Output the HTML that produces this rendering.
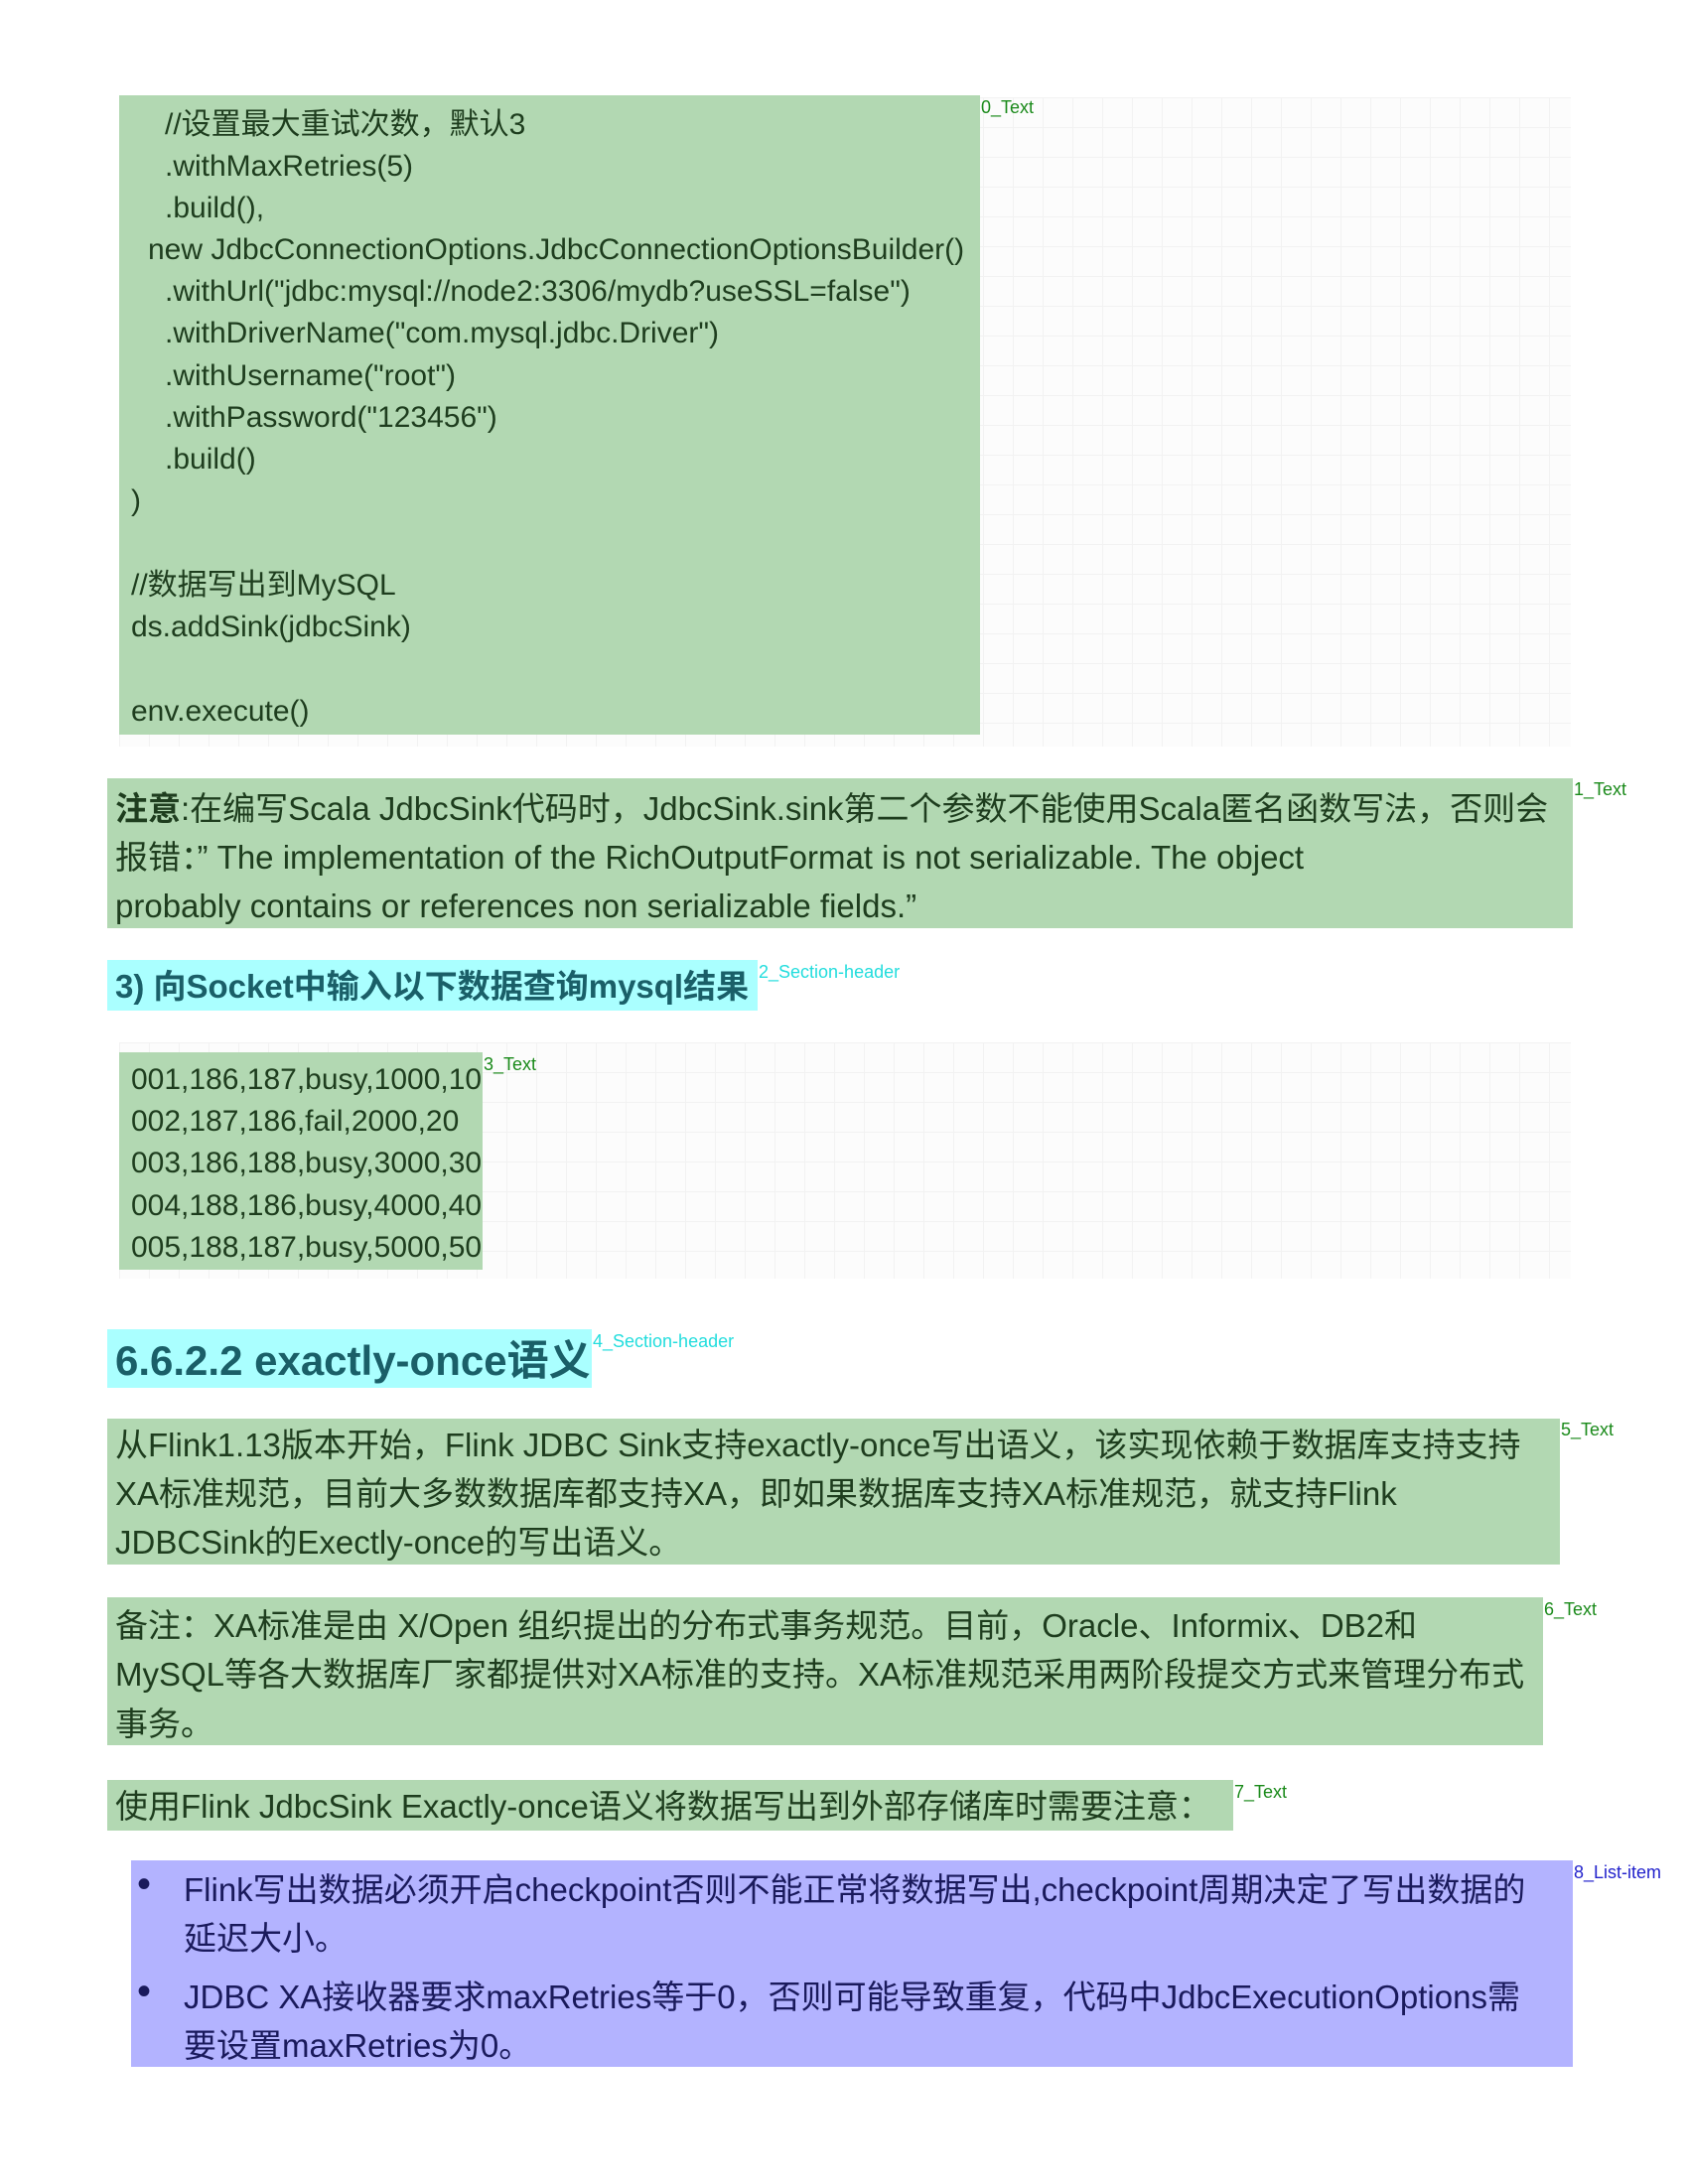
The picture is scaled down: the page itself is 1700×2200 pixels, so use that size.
<!DOCTYPE html>
<html><head><meta charset="utf-8"><style>
*{margin:0;padding:0;box-sizing:border-box}
html,body{width:1700px;height:2200px;background:#fff;overflow:hidden}
body{position:relative;font-family:"Liberation Sans","Noto Sans CJK SC",sans-serif}
.a{position:absolute}
.grid{background-color:#fcfcfc;background-image:linear-gradient(#f2f2f2 1px,transparent 1px),linear-gradient(90deg,#f2f2f2 1px,transparent 1px);background-size:30px 30px}
.g{background:#b2d8b2;color:#1e3d1e}
.c{background:#aaffff;color:#1a5f68;font-weight:bold}
.p{background:#b3b3ff;color:#1a1a5c}
.l{position:absolute;white-space:nowrap}
.lab{position:absolute;font-size:18px;white-space:nowrap}
.code .l{font-size:30px;line-height:42px}
.t .l{font-size:33px;line-height:49px}
.b{font-size:40px!important}
</style></head><body>

<div class="a grid" style="left:120px;top:98px;width:1462px;height:654px"></div>
<div class="a g code" style="left:120px;top:96px;width:867px;height:644px">
<div class="l" style="left:46px;top:9px">//设置最大重试次数，默认3</div>
<div class="l" style="left:46px;top:51px">.withMaxRetries(5)</div>
<div class="l" style="left:46px;top:93px">.build(),</div>
<div class="l" style="left:29px;top:135px">new JdbcConnectionOptions.JdbcConnectionOptionsBuilder()</div>
<div class="l" style="left:46px;top:177px">.withUrl("jdbc:mysql://node2:3306/mydb?useSSL=false")</div>
<div class="l" style="left:46px;top:219px">.withDriverName("com.mysql.jdbc.Driver")</div>
<div class="l" style="left:46px;top:262px">.withUsername("root")</div>
<div class="l" style="left:46px;top:304px">.withPassword("123456")</div>
<div class="l" style="left:46px;top:346px">.build()</div>
<div class="l" style="left:12px;top:388px">)</div>
<div class="l" style="left:12px;top:473px">//数据写出到MySQL</div>
<div class="l" style="left:12px;top:515px">ds.addSink(jdbcSink)</div>
<div class="l" style="left:12px;top:600px">env.execute()</div>
</div>
<div class="lab" style="left:988px;top:98px;color:#1a8a1a">0_Text</div>

<div class="a g t" style="left:108px;top:784px;width:1476px;height:151px">
<div class="l" style="left:8px;top:6px"><b>注意</b>:在编写Scala JdbcSink代码时，JdbcSink.sink第二个参数不能使用Scala匿名函数写法，否则会</div>
<div class="l" style="left:8px;top:55px">报错：”  The implementation of the RichOutputFormat is not serializable. The object</div>
<div class="l" style="left:8px;top:104px">probably contains or references non serializable fields.”</div>
</div>
<div class="lab" style="left:1585px;top:785px;color:#1a8a1a">1_Text</div>

<div class="a c" style="left:108px;top:967px;width:655px;height:51px"><div class="l" style="left:8px;top:7px;font-size:33px;line-height:40px">3) 向Socket中输入以下数据查询mysql结果</div></div>
<div class="lab" style="left:764px;top:969px;color:#22dddd">2_Section-header</div>

<div class="a grid" style="left:120px;top:1050px;width:1462px;height:238px"></div>
<div class="a g code" style="left:120px;top:1060px;width:366px;height:219px">
<div class="l" style="left:12px;top:7px">001,186,187,busy,1000,10</div>
<div class="l" style="left:12px;top:49px">002,187,186,fail,2000,20</div>
<div class="l" style="left:12px;top:91px">003,186,188,busy,3000,30</div>
<div class="l" style="left:12px;top:134px">004,188,186,busy,4000,40</div>
<div class="l" style="left:12px;top:176px">005,188,187,busy,5000,50</div>
</div>
<div class="lab" style="left:487px;top:1062px;color:#1a8a1a">3_Text</div>

<div class="a c" style="left:108px;top:1339px;width:488px;height:59px"><div class="l" style="left:8px;top:6px;font-size:42px;line-height:52px">6.6.2.2 exactly-once语义</div></div>
<div class="lab" style="left:597px;top:1341px;color:#22dddd">4_Section-header</div>

<div class="a g t" style="left:108px;top:1429px;width:1463px;height:147px">
<div class="l" style="left:8px;top:2px">从Flink1.13版本开始，Flink JDBC Sink支持exactly-once写出语义，该实现依赖于数据库支持支持</div>
<div class="l" style="left:8px;top:51px">XA标准规范，目前大多数数据库都支持XA，即如果数据库支持XA标准规范，就支持Flink</div>
<div class="l" style="left:8px;top:100px">JDBCSink的Exectly-once的写出语义。</div>
</div>
<div class="lab" style="left:1572px;top:1430px;color:#1a8a1a">5_Text</div>

<div class="a g t" style="left:108px;top:1609px;width:1446px;height:149px">
<div class="l" style="left:8px;top:4px">备注：XA标准是由 X/Open 组织提出的分布式事务规范。目前，Oracle、Informix、DB2和</div>
<div class="l" style="left:8px;top:53px">MySQL等各大数据库厂家都提供对XA标准的支持。XA标准规范采用两阶段提交方式来管理分布式</div>
<div class="l" style="left:8px;top:103px">事务。</div>
</div>
<div class="lab" style="left:1555px;top:1611px;color:#1a8a1a">6_Text</div>

<div class="a g t" style="left:108px;top:1793px;width:1134px;height:51px">
<div class="l" style="left:8px;top:2px">使用Flink JdbcSink Exactly-once语义将数据写出到外部存储库时需要注意：</div>
</div>
<div class="lab" style="left:1243px;top:1795px;color:#1a8a1a">7_Text</div>

<div class="a p t" style="left:132px;top:1874px;width:1452px;height:208px">
<div class="l b" style="left:6px;top:0px">•</div>
<div class="l" style="left:53px;top:5px">Flink写出数据必须开启checkpoint否则不能正常将数据写出,checkpoint周期决定了写出数据的</div>
<div class="l" style="left:53px;top:54px">延迟大小。</div>
<div class="l b" style="left:6px;top:108px">•</div>
<div class="l" style="left:53px;top:113px">JDBC XA接收器要求maxRetries等于0，否则可能导致重复，代码中JdbcExecutionOptions需</div>
<div class="l" style="left:53px;top:162px">要设置maxRetries为0。</div>
</div>
<div class="lab" style="left:1585px;top:1876px;color:#2222cc">8_List-item</div>

</body></html>
